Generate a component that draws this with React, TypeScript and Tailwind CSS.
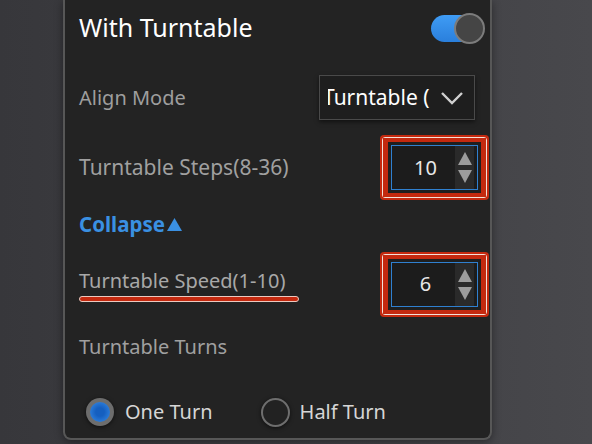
import React from 'react';

const SpinBox: React.FC<{ value: string }> = ({ value }) => (
  <div className="rounded-[4px] bg-[#c4290f] p-[2px]">
    <div className="rounded-[3px] border border-[#f3e2da]">
      <div className="border-x-[5px] border-y-[4px] border-[#c4290f] bg-[#1f1f1f] p-[3px]">
        <div className="flex h-[45px] w-[87px] border border-[#2f80d0] bg-[#1c1c1c]">
          <div className="flex flex-1 items-center justify-center pl-[4px] text-[20px] text-[#e8e8e8]">
            {value}
          </div>
          <div className="mr-[3px] flex w-[19px] flex-col items-center justify-center gap-[3px] bg-[#2a2a2a]">
            <svg width="16" height="15" viewBox="0 0 16 15">
              <path d="M8 1 L15 14 L1 14 Z" fill="#9c9c9c" />
            </svg>
            <svg width="16" height="15" viewBox="0 0 16 15">
              <path d="M1 1 L15 1 L8 14 Z" fill="#9c9c9c" />
            </svg>
          </div>
        </div>
      </div>
    </div>
  </div>
);

export default function App() {
  return (
    <div
      className="h-[444px] w-[592px] overflow-hidden bg-gradient-to-r from-[#37373b] to-[#48484c] pl-[63px]"
      style={{ fontFamily: '"Noto Sans", "Open Sans", sans-serif' }}
    >
      <div className="flex h-[440px] w-[429px] flex-col rounded-b-[8px] border-x-2 border-b-2 border-[#575757] bg-[#232323] pl-[14px] shadow-[0_2px_8px_rgba(0,0,0,0.4)]">
        {/* header */}
        <div className="flex h-[56px] items-center justify-between pr-[5px]">
          <span className="text-[25px] text-white">With Turntable</span>
          <div className="relative h-[31px] w-[54px]">
            <div className="absolute left-0 top-[2px] h-[27px] w-[50px] rounded-full bg-gradient-to-b from-[#3f9cf5] to-[#2a7fdc]" />
            <div className="absolute right-0 top-0 h-[31px] w-[31px] rounded-full border-2 border-[#7c7c7c] bg-[#454545]" />
          </div>
        </div>

        {/* align mode */}
        <div className="mt-[19px] flex h-[45px] items-center justify-between pr-[15px]">
          <span className="text-[20px] text-[#9e9e9e]">Align Mode</span>
          <div className="flex h-[45px] w-[156px] items-center border border-[#4a4a4a] bg-[#1e1e1e] shadow-[0_2px_4px_rgba(0,0,0,0.5)]">
            <div className="ml-[8px] w-[106px] overflow-hidden whitespace-nowrap">
              <span className="-ml-[5px] inline-block text-[21px] text-white">Turntable (</span>
            </div>
            <svg className="ml-[6px]" width="24" height="14" viewBox="0 0 24 14">
              <path d="M2 2 L12 12 L22 2" fill="none" stroke="#d0d0d0" strokeWidth="2.4" />
            </svg>
          </div>
        </div>

        {/* steps */}
        <div className="mt-[15px] flex h-[65px] items-center justify-between pr-[1px]">
          <span className="text-[21px] text-[#a0a0a0]">Turntable Steps(8-36)</span>
          <SpinBox value="10" />
        </div>

        {/* collapse */}
        <div className="flex h-[48px] items-center">
          <span className="text-[20.5px] font-bold text-[#3a90e2]">Collapse</span>
          <svg className="ml-[2px]" width="15" height="13" viewBox="0 0 15 13">
            <path d="M7.5 0 L15 13 L0 13 Z" fill="#3a90e2" />
          </svg>
        </div>

        {/* speed */}
        <div className="mt-[5px] flex h-[62px] items-center justify-between pr-[1px]">
          <div className="flex flex-col">
            <span className="text-[20px] leading-[28px] text-[#a8a8a8]">Turntable Speed(1-10)</span>
            <div className="mt-[1px] h-[6px] w-[220px] rounded-full border border-[#ecc9bf] bg-[#c4290f]" />
          </div>
          <SpinBox value="6" />
        </div>

        {/* turns */}
        <div className="mt-[13px] flex h-[38px] items-center">
          <span className="text-[20px] text-[#a0a0a0]">Turntable Turns</span>
        </div>

        {/* radios */}
        <div className="mt-[28px] flex h-[36px] items-center pl-[7px]">
          <div className="flex items-center">
            <div className="flex h-[28px] w-[28px] items-center justify-center rounded-full bg-[#6d6d6d] shadow-[0_1px_4px_rgba(0,0,0,0.6)]">
              <div className="h-[20px] w-[20px] rounded-full bg-[radial-gradient(circle,#155fc0_30%,#3a8ee8_100%)]" />
            </div>
            <span className="ml-[11px] text-[20px] text-[#d6d6d6]">One Turn</span>
          </div>
          <div className="ml-[48px] flex items-center">
            <div className="h-[29px] w-[29px] rounded-full border-2 border-[#6e6e6e] bg-[#222] shadow-[0_1px_4px_rgba(0,0,0,0.6)]" />
            <span className="ml-[10px] text-[20px] text-[#d6d6d6]">Half Turn</span>
          </div>
        </div>
      </div>
    </div>
  );
}
